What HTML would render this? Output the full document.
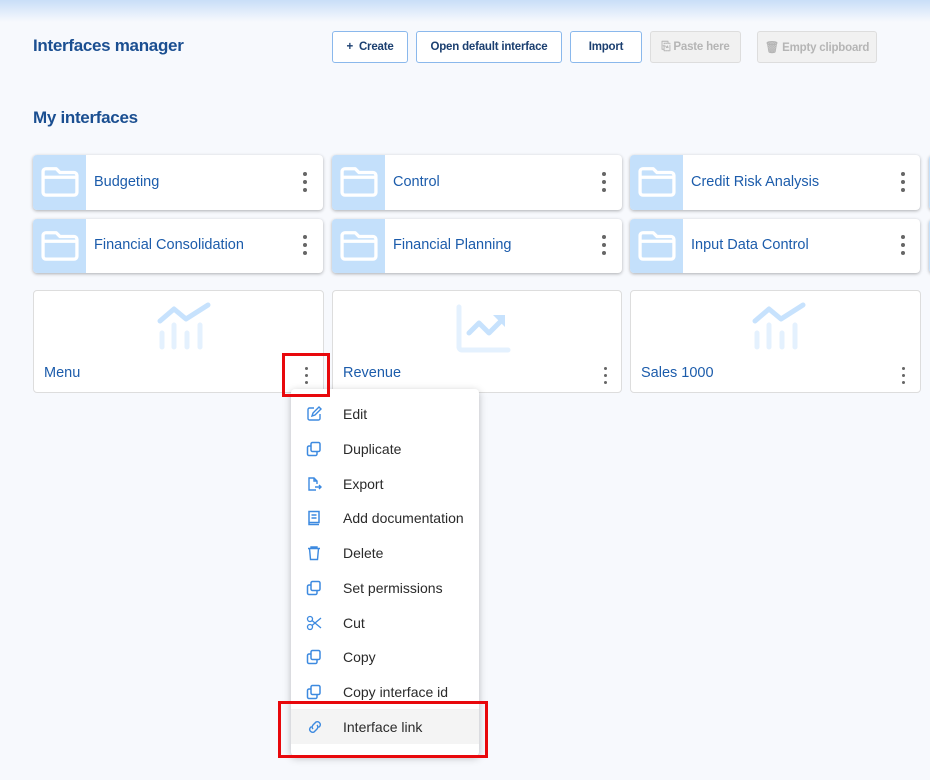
<!DOCTYPE html>
<html><head><style>
*{box-sizing:border-box;margin:0;padding:0}
body{width:930px;height:780px;background:#f7f9fd;font-family:"Liberation Sans",sans-serif;position:relative;overflow:hidden}
.top{position:absolute;left:0;top:0;width:930px;height:22px;background:linear-gradient(#c9def8,#f7f9fd)}
.abs{position:absolute}
h1{position:absolute;left:33px;top:36px;font-size:17px;color:#1b4f91;font-weight:bold;letter-spacing:-0.3px}
h2{position:absolute;left:33px;top:108px;font-size:17px;color:#1b4f91;font-weight:bold;letter-spacing:-0.3px}
.btn{position:absolute;top:31px;height:32px;border:1px solid #8ab8ec;border-radius:3px;background:#fff;font-size:11.5px;font-weight:bold;color:#1b3f70;display:flex;align-items:center;justify-content:center;letter-spacing:-0.2px}
.btn.dis{background:#f1f1f1;border-color:#ddd;color:#b5b5b5}
.fc{position:absolute;height:55px;background:#fff;border-radius:4px;box-shadow:0 1px 3px rgba(0,0,0,.3);overflow:hidden}
.fc .ic{position:absolute;left:0;top:0;width:53px;height:100%;background:#c4e0fb}
.fc .t{position:absolute;left:61px;top:0;line-height:55px;font-size:14.5px;color:#1c5cab}
.dots{position:absolute;width:4px}
.dots i{display:block;width:4px;height:4px;border-radius:2px;background:#666;margin-bottom:4px}
.bc{position:absolute;top:290px;height:103px;background:#fff;border:1px solid #ddd;border-radius:4px}
.bc .t{position:absolute;left:10px;top:74px;font-size:14.5px;color:#1c5cab}
.menu{position:absolute;left:291px;top:389px;width:188px;height:367px;background:#fff;border-radius:4px;box-shadow:0 2px 8px rgba(0,0,0,.25)}
.it{position:absolute;left:0;width:188px;height:35px;font-size:14px;color:#2a2a2a}
.it span{position:absolute;left:52px;top:10px}
.it svg{position:absolute;left:15px;top:10px}
.red{position:absolute;border:3px solid #e8080c}
</style></head><body>
<div class="top"></div>
<h1>Interfaces manager</h1>
<div class="btn" style="left:332px;width:76px">+&nbsp;&nbsp;Create</div>
<div class="btn" style="left:416px;width:146px">Open default interface</div>
<div class="btn" style="left:570px;width:72px">Import</div>
<div class="btn dis" style="left:650px;width:91px">⎘&nbsp;Paste here</div>
<div class="btn dis" style="left:757px;width:120px">🗑&nbsp;Empty clipboard</div>
<h2>My interfaces</h2>

<svg width="0" height="0" style="position:absolute"><defs><symbol id="fold" viewBox="0 0 40 34"><path d="M5 4h11l4 4h15a3 3 0 0 1 3 3v18a3 3 0 0 1-3 3H5a3 3 0 0 1-3-3V7a3 3 0 0 1 3-3zM2 13h36" fill="none" stroke="#fff" stroke-width="3.5" stroke-linejoin="round"/></symbol></defs></svg>

<div class="fc" style="left:33px;top:155px;width:290px"><div class="ic"><svg class="abs" style="left:8px;top:10px" width="38" height="32"><use href="#fold"/></svg></div><div class="t">Budgeting</div><div class="dots" style="left:270px;top:17px"><i></i><i></i><i></i></div></div>
<div class="fc" style="left:332px;top:155px;width:290px"><div class="ic"><svg class="abs" style="left:8px;top:10px" width="38" height="32"><use href="#fold"/></svg></div><div class="t">Control</div><div class="dots" style="left:270px;top:17px"><i></i><i></i><i></i></div></div>
<div class="fc" style="left:630px;top:155px;width:290px"><div class="ic"><svg class="abs" style="left:8px;top:10px" width="38" height="32"><use href="#fold"/></svg></div><div class="t">Credit Risk Analysis</div><div class="dots" style="left:271px;top:17px"><i></i><i></i><i></i></div></div>
<div class="fc" style="left:929px;top:155px;width:290px"><div class="ic"></div></div>
<div class="fc" style="left:33px;top:219px;width:290px;height:54px"><div class="ic"><svg class="abs" style="left:8px;top:10px" width="38" height="32"><use href="#fold"/></svg></div><div class="t" style="line-height:52px">Financial Consolidation</div><div class="dots" style="left:270px;top:16px"><i></i><i></i><i></i></div></div>
<div class="fc" style="left:332px;top:219px;width:290px;height:54px"><div class="ic"><svg class="abs" style="left:8px;top:10px" width="38" height="32"><use href="#fold"/></svg></div><div class="t" style="line-height:52px">Financial Planning</div><div class="dots" style="left:270px;top:16px"><i></i><i></i><i></i></div></div>
<div class="fc" style="left:630px;top:219px;width:290px;height:54px"><div class="ic"><svg class="abs" style="left:8px;top:10px" width="38" height="32"><use href="#fold"/></svg></div><div class="t" style="line-height:52px">Input Data Control</div><div class="dots" style="left:271px;top:16px"><i></i><i></i><i></i></div></div>
<div class="fc" style="left:929px;top:219px;width:290px;height:54px"><div class="ic"></div></div>

<svg width="0" height="0" style="position:absolute"><defs><symbol id="bars" viewBox="0 0 56 50"><path d="M4 20L18 8L30 18L52 4" fill="none" stroke="#c7e2fd" stroke-width="5" stroke-linecap="round" stroke-linejoin="round"/><g stroke="#e4f1fe" stroke-width="5" stroke-linecap="round"><path d="M6 32v14M18 24v22M31 32v14M44 24v22"/></g></symbol></defs></svg>

<div class="bc" style="left:33px;width:291px"><svg class="abs" style="left:122px;top:10px" width="56" height="50"><use href="#bars"/></svg><div class="t">Menu</div><div class="dots" style="left:271px;top:76px;width:3px"><i style="width:3px;height:3px"></i><i style="width:3px;height:3px"></i><i style="width:3px;height:3px"></i></div></div>
<div class="bc" style="left:332px;width:290px"><svg class="abs" style="left:122px;top:12px" width="56" height="50"><path d="M4 4v40a3 3 0 0 0 3 3h46" fill="none" stroke="#e4f1fe" stroke-width="5" stroke-linecap="round"/><path d="M14 30l10-10 10 10 12-12" fill="none" stroke="#c7e2fd" stroke-width="5" stroke-linecap="round" stroke-linejoin="round"/><path d="M38 12h12v12z" fill="#c7e2fd"/></svg><div class="t">Revenue</div><div class="dots" style="left:271px;top:76px;width:3px"><i style="width:3px;height:3px"></i><i style="width:3px;height:3px"></i><i style="width:3px;height:3px"></i></div></div>
<div class="bc" style="left:630px;width:291px"><svg class="abs" style="left:120px;top:10px" width="56" height="50"><use href="#bars"/></svg><div class="t">Sales 1000</div><div class="dots" style="left:271px;top:76px;width:3px"><i style="width:3px;height:3px"></i><i style="width:3px;height:3px"></i><i style="width:3px;height:3px"></i></div></div>

<svg width="0" height="0" style="position:absolute"><defs><symbol id="cp" viewBox="0 0 16 16"><rect x="5" y="1.5" width="9" height="9" rx="1.5" fill="none" stroke="#3d8ae0" stroke-width="1.5"/><path d="M5 5H3a1.5 1.5 0 0 0-1.5 1.5V13A1.5 1.5 0 0 0 3 14.5h6.5A1.5 1.5 0 0 0 11 13v-2" fill="none" stroke="#3d8ae0" stroke-width="1.5"/></symbol></defs></svg>
<div class="menu">
<div class="it" style="top:7px"><svg width="16" height="16" viewBox="0 0 16 16"><path d="M8 2H3.5A1.5 1.5 0 0 0 2 3.5v9A1.5 1.5 0 0 0 3.5 14h9a1.5 1.5 0 0 0 1.5-1.5V8M6 10l1-3 6-6 2 2-6 6z" fill="none" stroke="#3d8ae0" stroke-width="1.4"/></svg><span>Edit</span></div>
<div class="it" style="top:42px"><svg width="16" height="16"><use href="#cp"/></svg><span>Duplicate</span></div>
<div class="it" style="top:77px"><svg width="16" height="16" viewBox="0 0 16 16"><path d="M10 14H3V2h5l3 3v3M8 2v3h3M9 11h6M13 9l2 2-2 2" fill="none" stroke="#3d8ae0" stroke-width="1.4"/></svg><span>Export</span></div>
<div class="it" style="top:111px"><svg width="16" height="16" viewBox="0 0 16 16"><path d="M3 1.5h10v11H3zM3 12.5v2h10M5.5 5h5M5.5 8h5" fill="none" stroke="#3d8ae0" stroke-width="1.5"/></svg><span>Add documentation</span></div>
<div class="it" style="top:146px"><svg width="16" height="16" viewBox="0 0 16 16"><path d="M2 3.5h12M5 3.5V2h6v1.5M3.5 3.5l1 11h7l1-11" fill="none" stroke="#3d8ae0" stroke-width="1.4"/></svg><span>Delete</span></div>
<div class="it" style="top:181px"><svg width="16" height="16"><use href="#cp"/></svg><span>Set permissions</span></div>
<div class="it" style="top:216px"><svg width="16" height="16" viewBox="0 0 16 16"><circle cx="4" cy="4" r="2.5" fill="none" stroke="#3d8ae0" stroke-width="1.3"/><circle cx="4" cy="12" r="2.5" fill="none" stroke="#3d8ae0" stroke-width="1.3"/><path d="M6 5.5L15 13M6 10.5L15 3" stroke="#3d8ae0" stroke-width="1.3"/></svg><span>Cut</span></div>
<div class="it" style="top:250px"><svg width="16" height="16"><use href="#cp"/></svg><span>Copy</span></div>
<div class="it" style="top:285px"><svg width="16" height="16"><use href="#cp"/></svg><span>Copy interface id</span></div>
<div class="it" style="top:320px;background:#f4f4f4"><svg width="18" height="16" viewBox="0 0 18 16"><path d="M7 10a3 3 0 0 1 0-4l3-3a3 3 0 0 1 4 4l-1.5 1.5M11 6a3 3 0 0 1 0 4l-3 3a3 3 0 0 1-4-4l1.5-1.5" fill="none" stroke="#3d8ae0" stroke-width="1.4"/></svg><span>Interface link</span></div>
</div>
<div class="red" style="left:282px;top:353px;width:48px;height:44px"></div>
<div class="red" style="left:278px;top:701px;width:210px;height:57px"></div>
</body></html>
